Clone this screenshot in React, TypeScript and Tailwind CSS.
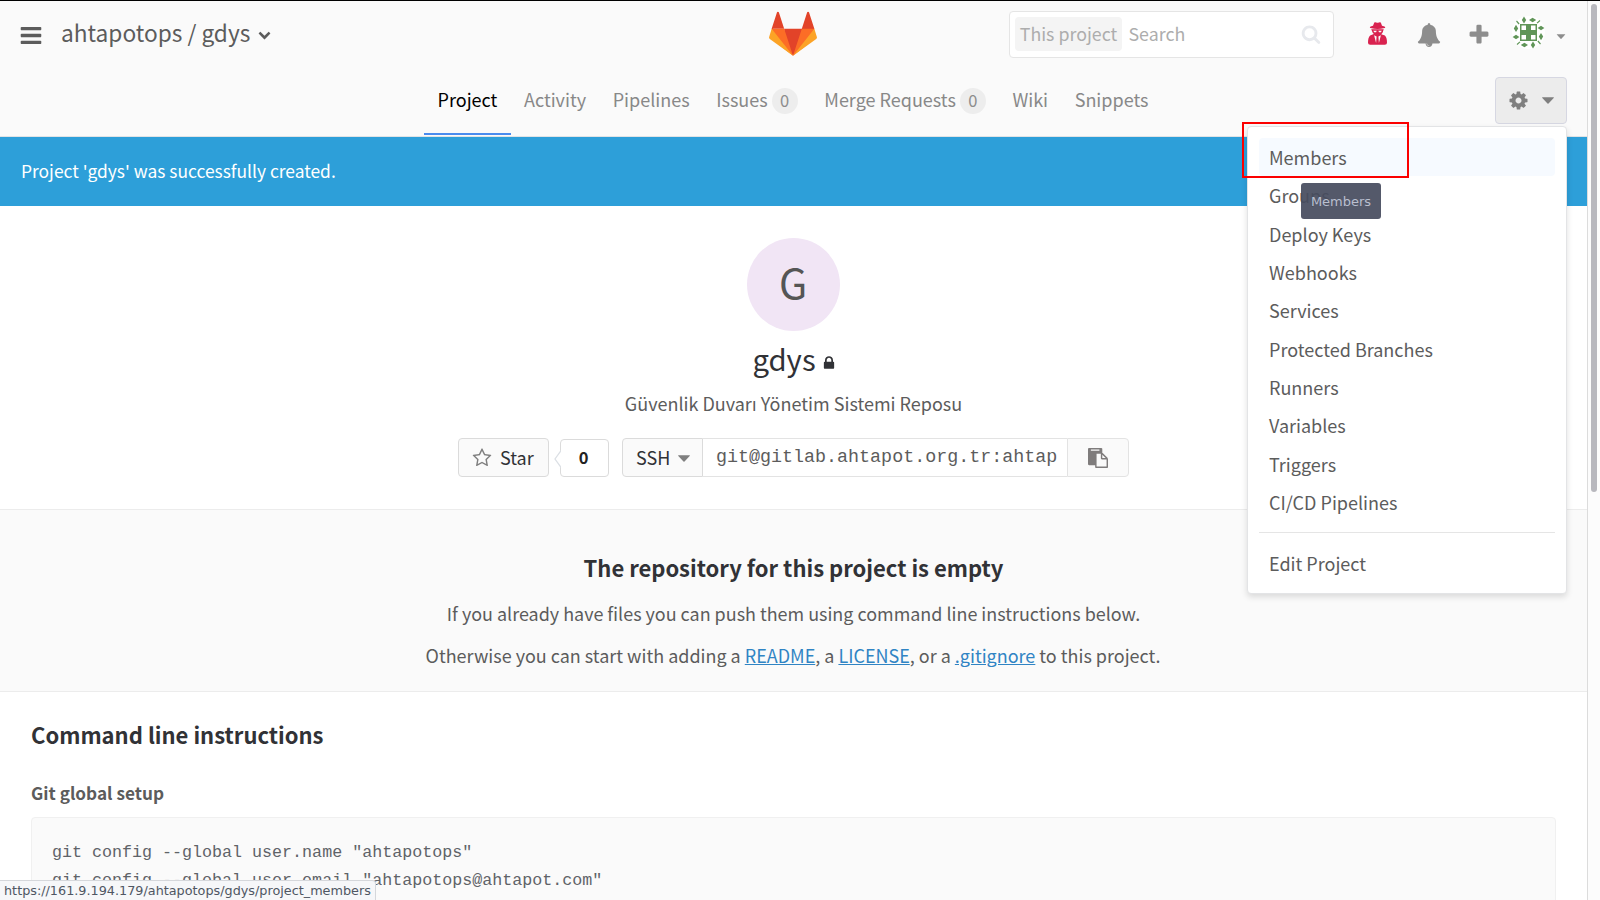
import React from 'react';

const paths = {
  bars: 'M1664 1344v128q0 26-19 45t-45 19h-1408q-26 0-45-19t-19-45v-128q0-26 19-45t45-19h1408q26 0 45 19t19 45zm0-512v128q0 26-19 45t-45 19h-1408q-26 0-45-19t-19-45v-128q0-26 19-45t45-19h1408q26 0 45 19t19 45zm0-512v128q0 26-19 45t-45 19h-1408q-26 0-45-19t-19-45v-128q0-26 19-45t45-19h1408q26 0 45 19t19 45z',
  chevron: 'M1683 808l-742 741q-19 19-45 19t-45-19l-742-741q-19-19-19-45.5t19-45.5l166-165q19-19 45-19t45 19l531 531 531-531q19-19 45-19t45 19l166 165q19 19 19 45.5t-19 45.5z',
  search: 'M1216 832q0-185-131.5-316.5t-316.5-131.5-316.5 131.5-131.5 316.5 131.5 316.5 316.5 131.5 316.5-131.5 131.5-316.5zm512 832q0 52-38 90t-90 38q-54 0-90-38l-343-342q-179 124-399 124-143 0-273.5-55.5t-225-150-150-225-55.5-273.5 55.5-273.5 150-225 225-150 273.5-55.5 273.5 55.5 225 150 150 225 55.5 273.5q0 220-124 399l343 343q37 37 37 90z',
  bell: 'M912 1696q0-16-16-16-59 0-101.5-42.5t-42.5-101.5q0-16-16-16t-16 16q0 73 51.5 124.5t124.5 51.5q16 0 16-16zm816-288q0 52-38 90t-90 38h-448q0 106-75 181t-181 75-181-75-75-181h-448q-52 0-90-38t-38-90q50-42 91-88t85-119.5 74.5-158.5 50-206 19.5-260q0-152 117-282.5t307-158.5q-8-19-8-39 0-40 28-68t68-28 68 28 28 68q0 20-8 39 190 28 307 158.5t117 282.5q0 139 19.5 260t50 206 74.5 158.5 85 119.5 91 88z',
  plus: 'M1600 736v192q0 40-28 68t-68 28h-416v416q0 40-28 68t-68 28h-192q-40 0-68-28t-28-68v-416h-416q-40 0-68-28t-28-68v-192q0-40 28-68t68-28h416v-416q0-40 28-68t68-28h192q40 0 68 28t28 68v416h416q40 0 68 28t28 68z',
  cog: 'M1152 896q0-106-75-181t-181-75-181 75-75 181 75 181 181 75 181-75 75-181zm512-109v222q0 12-8 23t-20 13l-185 28q-19 54-39 91 35 50 107 138 10 12 10 25t-9 23q-27 37-99 108t-94 71q-12 0-26-9l-138-108q-44 23-91 38-16 136-29 186-7 28-36 28h-222q-14 0-24.5-8.5t-11.5-21.5l-28-184q-49-16-90-37l-141 107q-10 9-25 9-14 0-25-11-126-114-165-168-7-10-7-23 0-12 8-23 15-21 51-66.5t54-70.5q-27-50-41-99l-183-27q-13-2-21-12.5t-8-23.5v-222q0-12 8-23t19-13l186-28q14-46 39-92-40-57-107-138-10-12-10-24 0-10 9-23 26-36 98.5-107.5t94.5-71.5q13 0 26 10l138 107q44-23 91-38 16-136 29-186 7-28 36-28h222q14 0 24.5 8.5t11.5 21.5l28 184q49 16 90 37l142-107q9-9 24-9 13 0 25 10 129 119 165 170 7 8 7 22 0 12-8 23-15 21-51 66.5t-54 70.5q26 50 41 98l183 28q13 2 21 12.5t8 23.5z',
  lock: 'M640 768h512v-192q0-106-75-181t-181-75-181 75-75 181v192zm832 96v576q0 40-28 68t-68 28h-960q-40 0-68-28t-28-68v-576q0-40 28-68t68-28h32v-192q0-184 132-316t316-132 316 132 132 316v192h32q40 0 68 28t28 68z',
  star: 'M1201 1004l306-297-422-62-189-382-189 382-422 62 306 297-73 421 378-199 377 199zm527-357q0 22-26 48l-363 354 86 500q1 7 1 20 0 50-41 50-19 0-40-12l-449-236-449 236q-22 12-40 12-21 0-31.5-14.5t-10.5-35.5q0-6 2-20l86-500-364-354q-25-27-25-48 0-37 56-46l502-73 225-455q19-41 49-41t49 41l225 455 502 73q56 9 56 46z',
  paste: 'M768 1664h896v-640h-416q-40 0-68-28t-28-68v-416h-384v1152zm256-1440v-64q0-13-9.5-22.5t-22.5-9.5h-704q-13 0-22.5 9.5t-9.5 22.5v64q0 13 9.5 22.5t22.5 9.5h704q13 0 22.5-9.5t9.5-22.5zm256 672h299l-299-299v299zm512 128v672q0 40-28 68t-68 28h-960q-40 0-68-28t-28-68v-160h-544q-40 0-68-28t-28-68v-1344q0-40 28-68t68-28h1088q40 0 68 28t28 68v328q21 13 36 28l408 408q28 28 48 76t20 88z',
};

function Icon({ name, className }: { name: keyof typeof paths; className: string }) {
  return (
    <svg viewBox="0 0 1792 1792" fill="currentColor" className={`block shrink-0 ${className}`}>
      <path d={paths[name]} />
    </svg>
  );
}

function SecretUser() {
  return (
    <svg viewBox="0 0 19 23" className="mb-px block h-[23px] w-[19px] shrink-0" fill="#d9224f">
      <path d="M6.3 0.4Q7.3 0 8.3 0.5T10.8 0.5Q11.8 0 12.8 0.4L14 3.8Q17.3 4.5 17.3 5.3Q17.3 6.7 9.5 6.9Q1.8 6.7 1.8 5.3Q1.8 4.5 5 3.8z" />
      <path d="M3.2 7.2h12.6l-.6 1.6q-.3 2.2-2 3.4l3.7 1.4q2.1 2 2.1 7.1 0 2.1-2.2 2.1H2.2Q0 22.8 0 20.7q0-5.100 2.100-7.100l3.700-1.600Q4.300 10.900 3.900 8.800z" />
      <path d="M5.300 8.700h3.400l-.6 1.500H6.200zM10.400 8.700h3.400l-.9 1.500H11zM6.100 13.200l2.500 1.300-.5 6.500zM12.900 13.200l-2.500 1.300.5 6.500z" fill="#fafafa" />
    </svg>
  );
}

function Caret({ className }: { className: string }) {
  return (
    <svg viewBox="0 0 12 7" fill="currentColor" className={`block shrink-0 ${className}`}>
      <path d="M0.4 0.3h11.2q.5.2.1.7L6.5 6.6q-.5.5-1 0L.3 1Q-.1.5.4.3z" />
    </svg>
  );
}

function Tanuki() {
  return (
    <svg viewBox="0 0 36 36" className="block h-12 w-12">
      <path fill="#e24329" d="M2 14l9.38 9v-9l-4-12.28c-.205-.632-1.176-.632-1.38 0zM34 14l-9.38 9v-9l4-12.28c.205-.632 1.176-.632 1.38 0zM18 34.38L3 14h30z" />
      <path fill="#fc6d26" d="M18 34.38L11.38 14H2l4 11zM18 34.38L24.62 14H34l-4 11z" />
      <path fill="#fca326" d="M2 14L.1 20.16c-.18.565 0 1.2.5 1.56L18 34.38zM34 14l1.9 6.16c.18.565 0 1.2-.5 1.56L18 34.38z" />
    </svg>
  );
}

function Identicon() {
  const quarter = (
    <g>
      <path d="M12 0.6l2.2 3.4-2.2 3.4-2.2-3.4z" />
      <path d="M17 4l3.6-2.2L24.2 4l-3.6 2.2z" />
      <path d="M4.5 5l2.6 3" stroke="#609558" strokeWidth="1.2" />
    </g>
  );
  return (
    <svg viewBox="0 0 33 33" className="block h-[33px] w-[33px]" fill="#609558">
      <rect width="33" height="33" rx="16.5" fill="#fff" />
      <path fillRule="evenodd" d="M8 8h17v17H8zM9.5 9.5v4.5h4.5v-4.5zM19 9.5v4.5h4.5v-4.5zM9.5 19v4.5h4.5v-4.5zM19 19v4.5h4.5v-4.5z" />
      {quarter}
      <g transform="rotate(90 16.5 16.5)">{quarter}</g>
      <g transform="rotate(180 16.5 16.5)">{quarter}</g>
      <g transform="rotate(270 16.5 16.5)">{quarter}</g>
    </svg>
  );
}

const tabs: { label: string; count?: number }[] = [
  { label: 'Project' },
  { label: 'Activity' },
  { label: 'Pipelines' },
  { label: 'Issues', count: 0 },
  { label: 'Merge Requests', count: 0 },
  { label: 'Wiki' },
  { label: 'Snippets' },
];

const menu = ['Members', 'Groups', 'Deploy Keys', 'Webhooks', 'Services', 'Protected Branches', 'Runners', 'Variables', 'Triggers', 'CI/CD Pipelines'];

function SettingsMenu() {
  return (
    <div className="absolute right-0 top-[49px] z-10 h-[468px] w-[320px] rounded border border-[#e3e4e6] bg-white px-[11px] pt-[11px] text-[#5c5c5c] shadow-[0_3px_6px_rgba(0,0,0,0.13)]">
      {menu.map((item, i) => (
        <div key={item} className={`flex h-[38.35px] items-center rounded-sm px-2.5 pb-[0.6px] ${i === 0 ? 'bg-[#f6faff]' : ''}`}>
          {item}
        </div>
      ))}
      <div className="mt-[10.5px] mb-3 h-px bg-[#e5e5e5]" />
      <div className="flex h-[38px] items-center px-2.5 pb-0.5">Edit Project</div>
      <div className="absolute -left-[6px] -top-[5px] h-[56px] w-[167px] border-2 border-[#fb0000]" />
      <div className="absolute left-[53px] top-[56px] flex h-9 w-20 items-center justify-center rounded-[3px] bg-[#474c5f]/93 pt-0.5 font-['DejaVu_Sans'] text-[13px] text-[#b9bfcf]">
        Members
      </div>
    </div>
  );
}

export default function App() {
  return (
    <div className="relative flex h-[900px] w-[1600px] overflow-hidden border-t border-black bg-white font-['Noto_Sans_CJK_SC',sans-serif] text-[18px] leading-[26px] text-[#5c5c5c]">
      <div className="flex w-[1587px] shrink-0 flex-col">
        <header className="flex h-[136px] shrink-0 flex-col border-b border-[#e1e3e5] bg-[#fafafa]">
          <div className="grid h-[66px] grid-cols-[769px_48px_1fr] items-center">
            <div className="flex items-center pl-[19px]">
              <Icon name="bars" className="mt-0.5 h-[25px] w-6 text-[#5c5c5c]" />
              <span className="ml-[18px] pb-0.5 text-[22.7px] leading-8">ahtapotops / gdys</span>
              <Icon name="chevron" className="ml-[7.500px] h-[13px] w-[13px]" />
            </div>
            <Tanuki />
            <div className="flex items-center justify-end pr-[21px]">
              <div className="mr-[34px] flex h-[47px] w-[325px] items-center rounded border border-[#e5e5e5] bg-white pl-[5px] pr-3 text-[#adadad]">
                <span className="flex h-[34px] w-[107px] items-center justify-center rounded-sm bg-[#f4f4f4] pb-0.5 pl-px text-[17.800px]">This project</span>
                <span className="ml-[7px] flex-1 pb-0.5 text-[17.800px]">Search</span>
                <Icon name="search" className="h-5 w-5 text-[#e7e9ed]" />
              </div>
              <SecretUser />
              <Icon name="bell" className="ml-[30px] mt-px h-6 w-6 text-[#8d8d8d]" />
              <Icon name="plus" className="ml-[26.500px] mt-px h-6 w-6 text-[#8d8d8d]" />
              <div className="mb-[3px] ml-[21px]"><Identicon /></div>
              <Caret className="ml-[11px] mt-1 h-[5px] w-[10px] text-[#8d8d8d]" />
            </div>
          </div>
          <div className="relative flex h-[69px] justify-center">
            <nav className="mr-px flex h-[68px]">
              {tabs.map((t, i) => (
                <div key={t.label} className={`flex items-center px-[13.3px] ${i === 0 ? 'border-b-2 border-[#4a8bee] pt-0.5 text-black' : 'text-[#888888]'}`}>
                  <span className="pb-1">{t.label}</span>
                  {t.count !== undefined && (
                    <span className="mb-px ml-1 flex h-[26px] w-[26px] items-center justify-center rounded-full bg-[#ededed] pb-px text-[16.5px] text-[#8c8c8c]">{t.count}</span>
                  )}
                </div>
              ))}
            </nav>
            <div className="absolute right-5 top-2.5">
              <div className="flex h-[47px] w-[72px] items-center rounded border border-[#d6d7e2] bg-[#ececec] pl-[11.5px] text-[#7f7f7f]">
                <Icon name="cog" className="h-[21px] w-[21px]" />
                <Caret className="ml-[13.5px] h-[7px] w-3" />
              </div>
              <SettingsMenu />
            </div>
          </div>
        </header>

        <div className="flex h-[69px] shrink-0 items-center bg-[#2d9fd9] pb-[1.500px] pl-[21px] text-[17.4px] text-white">Project 'gdys' was successfully created.</div>

        <section className="flex h-[303px] shrink-0 flex-col items-center">
          <div className="mt-8 flex h-[93px] w-[93px] items-center justify-center rounded-full bg-[#f1e5f5] pb-2 pr-px text-[41px] text-[#555555]">G</div>
          <div className="mt-2 flex h-11 items-center pl-0.5 text-[29.3px] text-[#313236]">
            <span className="pb-[6px]">gdys</span>
            <Icon name="lock" className="ml-[5px] mt-1 h-4 w-4 text-[#313236]" />
          </div>
          <p className="mt-[7px]">Güvenlik Duvarı Yönetim Sistemi Reposu</p>
          <div className="mt-[22px] flex h-[39px] items-stretch">
            <div className="flex w-[91px] items-center rounded border border-[#dbdbdb] bg-[#fafafa] pl-[13px] text-[#313236]">
              <Icon name="star" className="h-5 w-5 text-[#7f7f7f]" />
              <span className="ml-2 pb-0.5">Star</span>
            </div>
            <div className="relative ml-[11px] mt-px flex w-[49px] items-center justify-center rounded-sm border border-[#dbdbdb] text-[#222222]">
              <svg viewBox="0 0 7 18" className="absolute -left-[7px] top-2.5 h-[18px] w-[7px]">
                <path d="M7 0.5L1 9L7 17.5" fill="#fff" stroke="#dce0e5" strokeWidth="1.3" />
              </svg>
              <span className="pr-0.5 pb-[3px] text-[16.5px] font-bold">0</span>
            </div>
            <div className="ml-[13px] flex w-[81px] items-center rounded-l border border-[#dbdbdb] bg-[#fafafa] pl-[13px] text-[#313236]">
              <span className="pb-0.5">SSH</span>
              <Caret className="ml-2 mt-0.5 h-[7px] w-3 text-[#7f7f7f]" />
            </div>
            <div className="flex w-[364px] items-center overflow-hidden border-y border-[#e3e3e3] pt-px pl-[13px] font-['Liberation_Mono',monospace] text-[18.35px] whitespace-nowrap">git@gitlab.ahtapot.org.tr:ahtap</div>
            <div className="flex w-[62px] items-center justify-center rounded-r border border-[#e3e3e3] bg-[#fafafa]">
              <Icon name="paste" className="h-5 w-5 text-[#7f7c7c]" />
            </div>
          </div>
        </section>

        <section className="flex h-[183px] shrink-0 flex-col items-center border-y border-[#ececec] bg-[#fafafa] pt-[43px]">
          <h4 className="h-7 text-[22px] leading-7 font-bold text-[#313236]">The repository for this project is empty</h4>
          <p className="mt-[19px] text-[17.950px]">If you already have files you can push them using command line instructions below.</p>
          <p className="mt-4 pr-px text-[17.980px]">
            Otherwise you can start with adding a <a className="text-[#3084c4] underline">README</a>, a <a className="text-[#3084c4] underline">LICENSE</a>, or a{' '}
            <a className="text-[#3084c4] underline">.gitignore</a> to this project.
          </p>
        </section>

        <section className="px-[31px] pt-[26px]">
          <h3 className="text-[22px] leading-8 font-bold text-[#313236]">Command line instructions</h3>
          <h5 className="mt-[30px] text-[17.2px] font-bold text-[#5c5c5c]">Git global setup</h5>
          <pre className="mt-[11px] h-[200px] rounded-sm border border-[#f0f0f0] bg-[#fafafa] px-5 pt-[21px] font-['Liberation_Mono',monospace] text-[16.68px] leading-7 text-[#5f6368]">{'git config --global user.name "ahtapotops"\ngit config --global user.email "ahtapotops@ahtapot.com"'}</pre>
        </section>
      </div>

      <div className="flex-1 border-l border-[#dcdcdc] bg-[#fcfcfc] pl-[3px] pt-[3px]">
        <div className="h-[488px] w-1.5 rounded-full bg-[#b8b8be]" />
      </div>

      <div className="absolute bottom-0 left-0 flex h-5 w-[376px] items-center rounded-tr-sm border-t border-r border-[#d5d7db] bg-[#f6f7f9] pt-px pl-1 font-['DejaVu_Sans'] text-[12.8px] whitespace-nowrap text-[#4f5663]">
        https://161.9.194.179/ahtapotops/gdys/project_members
      </div>
    </div>
  );
}
